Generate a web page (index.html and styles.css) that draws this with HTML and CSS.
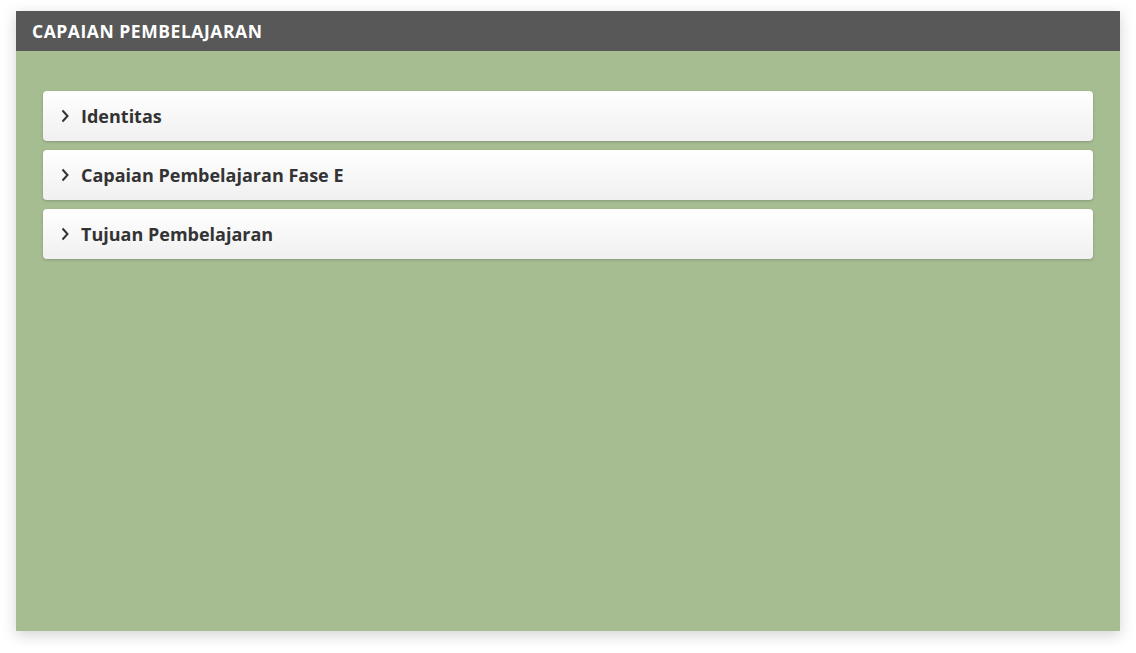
FILE: index.html
```html
<!DOCTYPE html>
<html lang="id">
<head>
<meta charset="utf-8">
<title>Capaian Pembelajaran</title>
<link rel="stylesheet" href="styles.css">
</head>
<body>
<section class="panel">
  <header class="panel-header">CAPAIAN PEMBELAJARAN</header>
  <div class="panel-body">
    <div class="acc-item">
      <svg class="chev" viewBox="0 0 8 14" width="8" height="14"><path d="M1.5 1.5 L6.5 7 L1.5 12.5" fill="none" stroke="#333" stroke-width="2"/></svg>
      <span class="acc-title">Identitas</span>
    </div>
    <div class="acc-item">
      <svg class="chev" viewBox="0 0 8 14" width="8" height="14"><path d="M1.5 1.5 L6.5 7 L1.5 12.5" fill="none" stroke="#333" stroke-width="2"/></svg>
      <span class="acc-title">Capaian Pembelajaran Fase E</span>
    </div>
    <div class="acc-item">
      <svg class="chev" viewBox="0 0 8 14" width="8" height="14"><path d="M1.5 1.5 L6.5 7 L1.5 12.5" fill="none" stroke="#333" stroke-width="2"/></svg>
      <span class="acc-title">Tujuan Pembelajaran</span>
    </div>
  </div>
</section>
</body>
</html>
```
FILE: styles.css
```css
html, body {
  margin: 0;
  padding: 0;
  background: #ffffff;
}
body {
  padding: 11px 16px 22px 16px;
  font-family: "Open Sans", "Noto Sans", sans-serif;
}
.panel {
  width: 1104px;
  height: 620px;
  display: flex;
  flex-direction: column;
  background: #a6bd92;
  box-shadow: 0 4px 14px rgba(0,0,0,0.18);
}
.panel-header {
  height: 40px;
  background: #585858;
  color: #ffffff;
  font-weight: 700;
  font-size: 17.5px;
  display: flex;
  align-items: center;
  padding-left: 16px;
  box-sizing: border-box;
  letter-spacing: 0.55px;
}
.panel-body {
  flex: 1;
  padding: 40px 27px 0 27px;
  display: flex;
  flex-direction: column;
  gap: 9px;
}
.acc-item {
  height: 50px;
  box-sizing: border-box;
  border-radius: 4px;
  background: linear-gradient(#ffffff, #f0f0f0);
  box-shadow: 0 1px 3px rgba(0,0,0,0.2);
  display: flex;
  align-items: center;
  padding-left: 18px;
  gap: 12px;
}
.chev {
  flex: none;
}
.acc-title {
  font-weight: 700;
  font-size: 18px;
  color: #333333;
}
```
